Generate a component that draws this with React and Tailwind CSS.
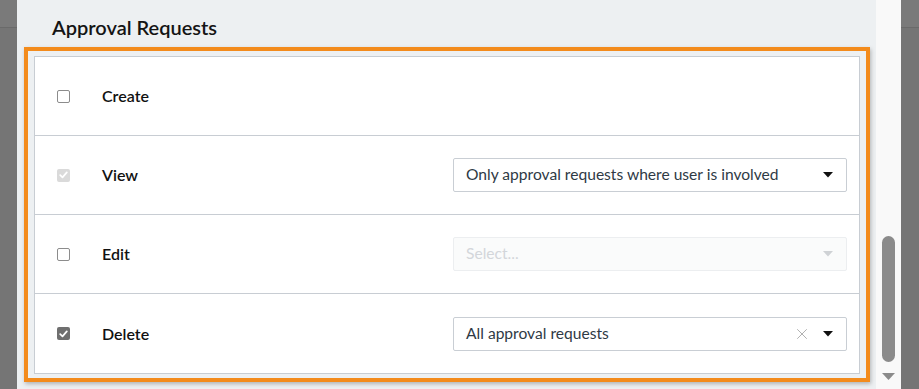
import { X } from 'lucide-react';

const rows = [
  { label: 'Create', check: 'off' },
  { label: 'View', check: 'disabled', select: { value: 'Only approval requests where user is involved' } },
  { label: 'Edit', check: 'off', select: { disabled: true } },
  { label: 'Delete', check: 'on', select: { value: 'All approval requests', clearable: true } },
];

function Checkbox({ state }) {
  if (state === 'off') {
    return <div className="w-[13px] h-[13px] rounded-[2px] border border-[#8c8c8c] bg-white" />;
  }
  const bg = state === 'on' ? 'bg-[#6f6f6f]' : 'bg-[#dadada]';
  return (
    <div className={`w-[13px] h-[13px] rounded-[2px] ${bg} flex items-center justify-center`}>
      <svg width="9" height="8" viewBox="0 0 9 8">
        <path d="M1.2 4.2 L3.5 6.4 L7.8 1.4" fill="none" stroke="white" strokeWidth="1.7" strokeLinecap="round" strokeLinejoin="round" />
      </svg>
    </div>
  );
}

function Caret({ light }) {
  return (
    <svg width="10" height="6" viewBox="0 0 10 6" className="shrink-0">
      <path d="M0 0 L10 0 L5 5.5 Z" fill={light ? '#cfd2d5' : '#111'} />
    </svg>
  );
}

function Select({ value, disabled, clearable }) {
  if (disabled) {
    return (
      <div className="w-[394px] h-[34px] rounded-[2px] border border-[#eceef0] bg-[#fafbfb] flex items-center pl-[12px] pr-[13px]">
        <span className="flex-1 text-[15.6px] text-[#d3d6da]">Select...</span>
        <Caret light />
      </div>
    );
  }
  return (
    <div className="w-[394px] h-[34px] rounded-[2px] border border-[#c9ced4] bg-white flex items-center pl-[12px] pr-[13px]">
      <span className="flex-1 text-[15.6px] text-[#2f3a45]">{value}</span>
      {clearable && <X className="w-[18px] h-[18px] text-[#a0a0a0] mr-[12px]" strokeWidth={1.1} />}
      <Caret />
    </div>
  );
}

export default function App() {
  return (
    <div className="w-[919px] h-[389px] flex bg-[#757575] font-['Lato','Open_Sans',sans-serif] overflow-hidden">
      {/* left backdrop */}
      <div className="w-[17px] flex flex-col">
        <div className="h-[28px] bg-[#7a7a7a] border-b border-[#6a6a6a]" />
        <div className="flex-1 bg-[#757575]" />
      </div>

      {/* main panel */}
      <div className="w-[859px] bg-[#edf0f2] flex flex-col">
        <h2 className="pl-[35px] pt-[15px] h-[47px] text-[20px] leading-[24px] font-semibold text-[#141414]">Approval Requests</h2>
        <div className="ml-[7px] mr-[6px] border-[4px] border-[#f38b1c] pt-[5px] pb-[4px] px-[6px] shadow-[1px_2px_4px_rgba(0,0,0,0.25)]">
          <div className="bg-white border border-[#c8cdd3] divide-y divide-[#c8cdd3]">
            {rows.map((row) => (
              <div key={row.label} className="h-[79px] flex items-center pl-[22px] pr-[12px]">
                <Checkbox state={row.check} />
                <span className="ml-[32px] flex-1 text-[16px] font-semibold text-[#111]">{row.label}</span>
                {row.select && <Select {...row.select} />}
              </div>
            ))}
          </div>
        </div>
      </div>

      {/* scrollbar */}
      <div className="w-[25px] bg-[#f9f9f9] flex flex-col items-center pt-[236px]">
        <div className="w-[13px] h-[126px] rounded-full bg-[#8b8b8b]" />
        <svg width="13" height="8" viewBox="0 0 13 8" className="mt-[11px]">
          <path d="M0 0 L13 0 L6.5 7 Z" fill="#8b8b8b" />
        </svg>
      </div>

      {/* right backdrop */}
      <div className="flex-1 flex flex-col">
        <div className="h-[28px] bg-[#7a7a7a] border-b border-[#6a6a6a]" />
        <div className="flex-1 bg-[#757575]" />
      </div>
    </div>
  );
}
